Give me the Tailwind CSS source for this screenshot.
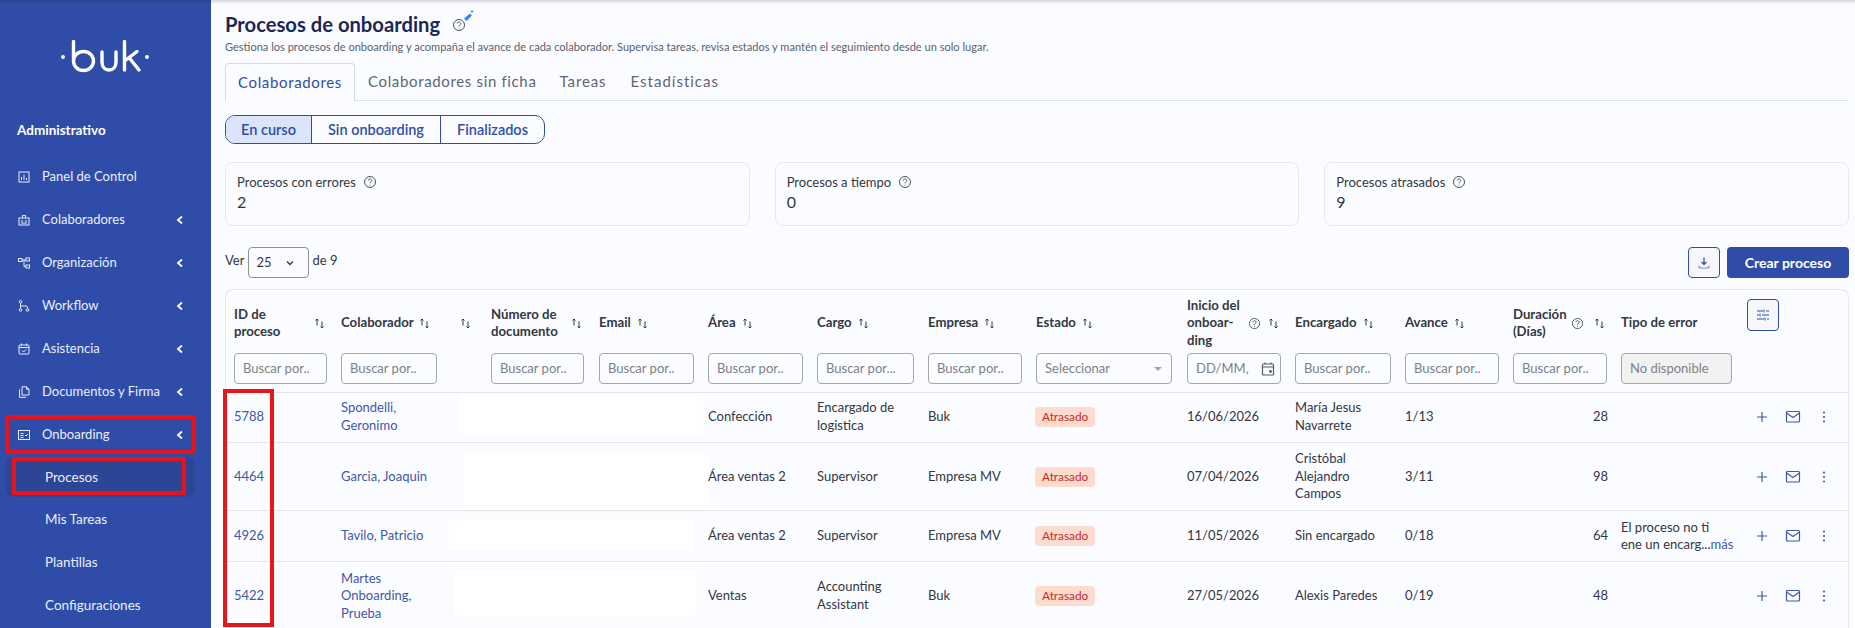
<!DOCTYPE html>
<html lang="es">
<head>
    <meta charset="UTF-8">
    <title>Procesos de onboarding</title>
    <script src="https://cdn.jsdelivr.net/npm/@tailwindcss/browser@4"></script>
</head>
<body class="relative h-[628px] overflow-hidden bg-[#fbfcff] font-['Lato','Noto_Sans',sans-serif] text-[13px] text-[#333842]">
    <div class="flex h-[628px]">
        <!-- Sidebar -->
        <aside class="w-[211px] shrink-0 bg-[#2f4da8] text-[#e9eefb]">
            <div class="flex h-[108px] justify-center pt-[36px]">
                <svg width="94" height="40" viewBox="0 0 94 40" fill="none" stroke="#fff" stroke-width="3.4" stroke-linecap="round">
                    <circle cx="4" cy="21" r="1.200" fill="#fff" stroke-width="1.500"/>
                    <path d="M14.500 5.500V25a10 9.500 0 1 0 20 0a10 9.500 0 1 0-20 0"/>
                    <path d="M43 16v10c0 5 3 8 7 8s7-3 7-8V16"/>
                    <path d="M65.500 5.500V34M65.500 25l12.500-9.500M70 21.500 80 34"/>
                    <circle cx="88" cy="21" r="1.200" fill="#fff" stroke-width="1.500"/>
                </svg>
            </div>
            <div class="pl-[17px] text-[13.500px] leading-[44px] font-bold text-white">Administrativo</div>
            <nav class="mt-[4px]">
                <a class="flex h-[42px] items-center pl-[18px] pr-[26px]">
                    <svg class="mr-[12px] size-[12px]" viewBox="0 0 12 12" fill="none" stroke="currentColor"><rect x="1" y="1" width="10" height="10"/><path d="M3.500 9V6M6 9V3.500M8.500 9V7"/></svg>
                    <span class="flex-1">Panel de Control</span>
                </a>
                <a class="flex h-[43px] items-center pl-[18px] pr-[26px]">
                    <svg class="mr-[12px] size-[12px]" viewBox="0 0 12 12" fill="none" stroke="currentColor"><rect x="1" y="4" width="10" height="7"/><path d="M4.500 4V1.500h3V4M3 7h2M7 7h2M3 9h6"/></svg>
                    <span class="flex-1">Colaboradores</span>
                    <svg class="size-[10px]" viewBox="0 0 10 10" fill="none" stroke="#fff" stroke-width="1.800"><path d="M7 1.500 3 5l4 3.500"/></svg>
                </a>
                <a class="flex h-[43px] items-center pl-[18px] pr-[26px]">
                    <svg class="mr-[12px] size-[12px]" viewBox="0 0 12 12" fill="none" stroke="currentColor"><rect x="0.500" y="1.500" width="3.500" height="3"/><rect x="8" y="1" width="3.500" height="3"/><rect x="8" y="8" width="3.500" height="3"/><path d="M4 3h4M6 3v6.500h2"/></svg>
                    <span class="flex-1">Organización</span>
                    <svg class="size-[10px]" viewBox="0 0 10 10" fill="none" stroke="#fff" stroke-width="1.800"><path d="M7 1.500 3 5l4 3.500"/></svg>
                </a>
                <a class="flex h-[43px] items-center pl-[18px] pr-[26px]">
                    <svg class="mr-[12px] size-[12px]" viewBox="0 0 12 12" fill="none" stroke="currentColor"><circle cx="2.500" cy="1.800" r="1.300"/><circle cx="2.500" cy="10" r="1.300"/><circle cx="9.500" cy="10" r="1.300"/><path d="M2.500 3v5.700M2.500 6H8c1.500 0 1.500 1 1.500 2.700"/></svg>
                    <span class="flex-1">Workflow</span>
                    <svg class="size-[10px]" viewBox="0 0 10 10" fill="none" stroke="#fff" stroke-width="1.800"><path d="M7 1.500 3 5l4 3.500"/></svg>
                </a>
                <a class="flex h-[43px] items-center pl-[18px] pr-[26px]">
                    <svg class="mr-[12px] size-[12px]" viewBox="0 0 12 12" fill="none" stroke="currentColor"><rect x="1" y="2" width="10" height="9" rx="1"/><path d="M1 4.500h10M3.500 0.500V2.500M8.500 0.500V2.500M4 7.500l1.500 1.500 2.500-2.500"/></svg>
                    <span class="flex-1">Asistencia</span>
                    <svg class="size-[10px]" viewBox="0 0 10 10" fill="none" stroke="#fff" stroke-width="1.800"><path d="M7 1.500 3 5l4 3.500"/></svg>
                </a>
                <a class="flex h-[43px] items-center pl-[18px] pr-[26px]">
                    <svg class="mr-[12px] size-[12px]" viewBox="0 0 12 12" fill="none" stroke="currentColor"><path d="M4 0.800h4.500L11 3.300V9H4zM8.500 0.800v2.500H11M1.500 3.500V11.300H8"/></svg>
                    <span class="flex-1">Documentos y Firma</span>
                    <svg class="size-[10px]" viewBox="0 0 10 10" fill="none" stroke="#fff" stroke-width="1.800"><path d="M7 1.500 3 5l4 3.500"/></svg>
                </a>
                <a class="flex h-[43px] items-center pl-[18px] pr-[26px]">
                    <svg class="mr-[12px] size-[12px]" viewBox="0 0 12 12" fill="none" stroke="currentColor"><rect x="0.500" y="1.500" width="11" height="9"/><path d="M2.500 4.500h3M2.500 6.500h3M2.500 8.500h3M7 6l1 1 2-2"/></svg>
                    <span class="flex-1">Onboarding</span>
                    <svg class="size-[10px]" viewBox="0 0 10 10" fill="none" stroke="#fff" stroke-width="1.800"><path d="M7 1.500 3 5l4 3.500"/></svg>
                </a>
                <a class="ml-[6px] mr-[16px] mt-[1px] flex h-[40px] items-center rounded-[8px] bg-[#2c4595] pl-[39px] text-[13.500px]">Procesos</a>
                <a class="mt-[1px] flex h-[43px] items-center pl-[45px] text-[13.500px]">Mis Tareas</a>
                <a class="flex h-[43px] items-center pl-[45px] text-[13.500px]">Plantillas</a>
                <a class="flex h-[43px] items-center pl-[45px] text-[13.500px]">Configuraciones</a>
            </nav>
        </aside>

        <!-- Main -->
        <main class="relative min-w-0 flex-1 pl-[14px] pr-[6px] pt-[11px]">
            <div class="flex h-[26px] items-center gap-[10px]">
                <h1 class="text-[20.200px] font-bold text-[#1b2754]">Procesos de onboarding</h1>
                <svg class="size-[24px] overflow-visible" viewBox="0 0 24 24" fill="none">
                    <circle cx="9" cy="13" r="5.500" stroke="#4b5563"/>
                    <path d="M7.300 11.600c0-2.200 3.400-2.200 3.400 0 0 1.400-1.700 1.300-1.700 2.800M9 15.700v.8" stroke="#4b5563"/>
                    <path d="M14 6.500 20 1.500l2 2-5.500 5.500z" fill="#3b82f6"/>
                    <path d="M22 -2v3M20.500 -.5h3" stroke="#3b82f6" stroke-width=".8"/>
                </svg>
            </div>
            <p class="mt-[2px] text-[11.050px] leading-[16px] text-[#5a616e]">Gestiona los procesos de onboarding y acompaña el avance de cada colaborador. Supervisa tareas, revisa estados y mantén el seguimiento desde un solo lugar.</p>

            <div class="mt-[8px] flex h-[38px] border-b border-[#dfe2e8] text-[15px] tracking-[0.65px] text-[#5f6672]">
                <div class="-mb-px flex w-[130px] items-center justify-center rounded-t-[4px] border border-b-0 border-[#d5d9e0] bg-[#fbfcff] text-[#2f4da8]">Colaboradores</div>
                <div class="flex items-center pl-[13px]">Colaboradores sin ficha</div>
                <div class="flex items-center pl-[23px] tracking-[0.9px]">Tareas</div>
                <div class="flex items-center pl-[24px] tracking-[1px]">Estadísticas</div>
            </div>

            <div class="mt-[14px] flex h-[29px] w-[320px] overflow-hidden rounded-[10px] border border-[#2f4da8] text-[14.500px] font-semibold text-[#2f4da8]">
                <div class="flex w-[86px] items-center justify-center border-r border-[#2f4da8] bg-[#dbe4f8]">En curso</div>
                <div class="flex w-[129px] items-center justify-center border-r border-[#2f4da8]">Sin onboarding</div>
                <div class="flex flex-1 items-center justify-center">Finalizados</div>
            </div>

            <div class="mt-[18px] grid grid-cols-3 gap-[25px]">
                <div class="h-[64px] rounded-[8px] border border-[#e6e8ed] px-[11px] pt-[10px]">
                    <div class="flex items-center gap-[7px] leading-[18px]">Procesos con errores
                        <svg class="size-[14px]" viewBox="0 0 14 14" fill="none" stroke="#4b5563"><circle cx="7" cy="7" r="5.500"/><path d="M5.300 5.600c0-2.200 3.400-2.200 3.400 0 0 1.400-1.700 1.300-1.700 2.800M7 9.800v.8"/></svg>
                    </div>
                    <div class="text-[16px] leading-[22px]">2</div>
                </div>
                <div class="h-[64px] rounded-[8px] border border-[#e6e8ed] px-[11px] pt-[10px]">
                    <div class="flex items-center gap-[7px] leading-[18px]">Procesos a tiempo
                        <svg class="size-[14px]" viewBox="0 0 14 14" fill="none" stroke="#4b5563"><circle cx="7" cy="7" r="5.500"/><path d="M5.300 5.600c0-2.200 3.400-2.200 3.400 0 0 1.400-1.700 1.300-1.700 2.800M7 9.800v.8"/></svg>
                    </div>
                    <div class="text-[16px] leading-[22px]">0</div>
                </div>
                <div class="h-[64px] rounded-[8px] border border-[#e6e8ed] px-[11px] pt-[10px]">
                    <div class="flex items-center gap-[7px] leading-[18px]">Procesos atrasados
                        <svg class="size-[14px]" viewBox="0 0 14 14" fill="none" stroke="#4b5563"><circle cx="7" cy="7" r="5.500"/><path d="M5.300 5.600c0-2.200 3.400-2.200 3.400 0 0 1.400-1.700 1.300-1.700 2.800M7 9.800v.8"/></svg>
                    </div>
                    <div class="text-[16px] leading-[22px]">9</div>
                </div>
            </div>

            <div class="mt-[21px] flex h-[32px] items-start">
                <span class="mt-[4px]">Ver</span>
                <div class="ml-[4px] flex h-[31px] w-[61px] items-center justify-between rounded-[4px] border border-[#8d9199] pl-[7px] pr-[13px]">
                    25
                    <svg class="size-[10px]" viewBox="0 0 10 10" fill="none" stroke="#333" stroke-width="1.300"><path d="M2 3.500 5 6.500 8 3.500"/></svg>
                </div>
                <span class="ml-[3px] mt-[4px]">de 9</span>
                <div class="ml-auto flex gap-[7px]">
                    <div class="flex h-[31px] w-[32px] items-center justify-center rounded-[4px] border border-[#2f4da8] bg-[#f6f7fb]">
                        <svg class="size-[14px]" viewBox="0 0 14 14" fill="none" stroke="#2f4da8" stroke-width="1.200"><path d="M7 1.500v7M4.500 6 7 8.500 9.500 6"/><path d="M2 9.500v1.500c0 .6.400 1 1 1h8c.6 0 1-.4 1-1V9.500" stroke="#7b8ccb"/></svg>
                    </div>
                    <div class="flex h-[31px] w-[122px] items-center justify-center rounded-[4px] bg-[#2f4da8] text-[14px] font-bold text-white">Crear proceso</div>
                </div>
            </div>

            <!-- Table -->
            <div class="relative mt-[10px] w-[1624px] rounded-t-[8px] border border-b-0 border-[#e6e8ed]">
                <button class="absolute left-[1521px] top-[9px] flex size-[32px] items-center justify-center rounded-[4px] border border-[#2f4da8] bg-[#f6f7fb]">
                    <svg class="size-[16px]" viewBox="0 0 16 16" fill="none" stroke="#2f4da8"><path d="M2 4h6M11 4h3M2 8h2M7 8h7M2 12h7M12 12h2M9 2.500v3M5 6.500v3M10 10.500v3"/></svg>
                </button>
                <table class="w-[1622px] table-fixed border-collapse">
                    <colgroup>
                        <col class="w-[107px]"><col class="w-[111px]"><col class="w-[39px]"><col class="w-[108px]"><col class="w-[109px]"><col class="w-[109px]"><col class="w-[111px]"><col class="w-[108px]"><col class="w-[151px]"><col class="w-[108px]"><col class="w-[110px]"><col class="w-[108px]"><col class="w-[108px]"><col class="w-[126px]"><col class="w-[109px]">
                    </colgroup>
                    <thead class="text-left text-[13.200px] leading-[17.500px] font-bold text-[#333842]">
                        <tr class="h-[63px] [&_th]:pt-[3px]">
                            <th class="pl-[8px]"><div class="flex w-[91px] items-center justify-between font-bold"><span>ID de<br>proceso</span> <svg class="size-[11px]" viewBox="0 0 11 11" fill="none" stroke="#333842"><path d="M3 7.500V1M1.500 2.500 3 1l1.500 1.500M8 3.500V10M6.500 8.500 8 10l1.500-1.500"/></svg></div></th>
                            <th class="pl-[8px]"><div class="flex items-center gap-[5px]">Colaborador <svg class="size-[11px]" viewBox="0 0 11 11" fill="none" stroke="#333842"><path d="M3 7.500V1M1.500 2.500 3 1l1.500 1.500M8 3.500V10M6.500 8.500 8 10l1.500-1.500"/></svg></div></th>
                            <th class="pl-[16px]"><svg class="size-[11px]" viewBox="0 0 11 11" fill="none" stroke="#333842"><path d="M3 7.500V1M1.500 2.500 3 1l1.500 1.500M8 3.500V10M6.500 8.500 8 10l1.500-1.500"/></svg></th>
                            <th class="pl-[8px]"><div class="flex w-[91px] items-center justify-between"><span>Número de<br>documento</span> <svg class="size-[11px]" viewBox="0 0 11 11" fill="none" stroke="#333842"><path d="M3 7.500V1M1.500 2.500 3 1l1.500 1.500M8 3.500V10M6.500 8.500 8 10l1.500-1.500"/></svg></div></th>
                            <th class="pl-[8px]"><div class="flex items-center gap-[6px]">Email <svg class="size-[11px]" viewBox="0 0 11 11" fill="none" stroke="#333842"><path d="M3 7.500V1M1.500 2.500 3 1l1.500 1.500M8 3.500V10M6.500 8.500 8 10l1.500-1.500"/></svg></div></th>
                            <th class="pl-[8px]"><div class="flex items-center gap-[6px]">Área <svg class="size-[11px]" viewBox="0 0 11 11" fill="none" stroke="#333842"><path d="M3 7.500V1M1.500 2.500 3 1l1.500 1.500M8 3.500V10M6.500 8.500 8 10l1.500-1.500"/></svg></div></th>
                            <th class="pl-[8px]"><div class="flex items-center gap-[6px]">Cargo <svg class="size-[11px]" viewBox="0 0 11 11" fill="none" stroke="#333842"><path d="M3 7.500V1M1.500 2.500 3 1l1.500 1.500M8 3.500V10M6.500 8.500 8 10l1.500-1.500"/></svg></div></th>
                            <th class="pl-[8px]"><div class="flex items-center gap-[6px]">Empresa <svg class="size-[11px]" viewBox="0 0 11 11" fill="none" stroke="#333842"><path d="M3 7.500V1M1.500 2.500 3 1l1.500 1.500M8 3.500V10M6.500 8.500 8 10l1.500-1.500"/></svg></div></th>
                            <th class="pl-[8px]"><div class="flex items-center gap-[6px]">Estado <svg class="size-[11px]" viewBox="0 0 11 11" fill="none" stroke="#333842"><path d="M3 7.500V1M1.500 2.500 3 1l1.500 1.500M8 3.500V10M6.500 8.500 8 10l1.500-1.500"/></svg></div></th>
                            <th class="pl-[8px]"><div class="flex w-[92px] items-center"><span>Inicio del<br>onboar-<br>ding</span>
                                <svg class="ml-[8px] size-[13px]" viewBox="0 0 14 14" fill="none" stroke="#4b5563"><circle cx="7" cy="7" r="5.500"/><path d="M5.300 5.600c0-2.200 3.400-2.200 3.400 0 0 1.400-1.700 1.300-1.700 2.800M7 9.800v.8"/></svg>
                                <svg class="ml-auto size-[11px]" viewBox="0 0 11 11" fill="none" stroke="#333842"><path d="M3 7.500V1M1.500 2.500 3 1l1.500 1.500M8 3.500V10M6.500 8.500 8 10l1.500-1.500"/></svg></div></th>
                            <th class="pl-[8px]"><div class="flex items-center gap-[6px]">Encargado <svg class="size-[11px]" viewBox="0 0 11 11" fill="none" stroke="#333842"><path d="M3 7.500V1M1.500 2.500 3 1l1.500 1.500M8 3.500V10M6.500 8.500 8 10l1.500-1.500"/></svg></div></th>
                            <th class="pl-[8px]"><div class="flex items-center gap-[6px]">Avance <svg class="size-[11px]" viewBox="0 0 11 11" fill="none" stroke="#333842"><path d="M3 7.500V1M1.500 2.500 3 1l1.500 1.500M8 3.500V10M6.500 8.500 8 10l1.500-1.500"/></svg></div></th>
                            <th class="pl-[8px]"><div class="flex w-[92px] items-center"><span>Duración<br>(Días)</span>
                                <svg class="ml-[4px] size-[13px]" viewBox="0 0 14 14" fill="none" stroke="#4b5563"><circle cx="7" cy="7" r="5.500"/><path d="M5.300 5.600c0-2.200 3.400-2.200 3.400 0 0 1.400-1.700 1.300-1.700 2.800M7 9.800v.8"/></svg>
                                <svg class="ml-auto size-[11px]" viewBox="0 0 11 11" fill="none" stroke="#333842"><path d="M3 7.500V1M1.500 2.500 3 1l1.500 1.500M8 3.500V10M6.500 8.500 8 10l1.500-1.500"/></svg></div></th>
                            <th class="pl-[8px]">Tipo de error</th>
                            <th></th>
                        </tr>
                        <tr class="h-[39px] border-b border-[#e3e5ea] text-[13px] font-normal text-[#7c818a]">
                            <th class="pb-[8px] pl-[8px] font-normal"><div class="flex h-[31px] w-[93px] items-center rounded-[4px] border border-[#a3a6ac] pl-[8px]">Buscar por..</div></th>
                            <th class="pb-[8px] pl-[8px] font-normal"><div class="flex h-[31px] w-[96px] items-center rounded-[4px] border border-[#a3a6ac] pl-[8px]">Buscar por..</div></th>
                            <th></th>
                            <th class="pb-[8px] pl-[8px] font-normal"><div class="flex h-[31px] w-[93px] items-center rounded-[4px] border border-[#a3a6ac] pl-[8px]">Buscar por..</div></th>
                            <th class="pb-[8px] pl-[8px] font-normal"><div class="flex h-[31px] w-[95px] items-center rounded-[4px] border border-[#a3a6ac] pl-[8px]">Buscar por..</div></th>
                            <th class="pb-[8px] pl-[8px] font-normal"><div class="flex h-[31px] w-[95px] items-center rounded-[4px] border border-[#a3a6ac] pl-[8px]">Buscar por..</div></th>
                            <th class="pb-[8px] pl-[8px] font-normal"><div class="flex h-[31px] w-[97px] items-center rounded-[4px] border border-[#a3a6ac] pl-[8px]">Buscar por...</div></th>
                            <th class="pb-[8px] pl-[8px] font-normal"><div class="flex h-[31px] w-[94px] items-center rounded-[4px] border border-[#a3a6ac] pl-[8px]">Buscar por..</div></th>
                            <th class="pb-[8px] pl-[8px] font-normal"><div class="flex h-[31px] w-[136px] items-center justify-between rounded-[4px] border border-[#a3a6ac] pl-[8px] pr-[9px]">Seleccionar
                                <span class="border-x-[4px] border-t-[4px] border-x-transparent border-t-[#a3a6ac]"></span></div></th>
                            <th class="pb-[8px] pl-[8px] font-normal"><div class="flex h-[31px] w-[94px] items-center justify-between rounded-[4px] border border-[#a3a6ac] pl-[8px] pr-[4px]">DD/MM,
                                <svg class="size-[16px]" viewBox="0 0 16 16" fill="none" stroke="#55595f" stroke-width="1.200"><rect x="2.500" y="3" width="11" height="11" rx="1"/><path d="M2.500 6h11M5 1.500V3M11 1.500V3"/><circle cx="10.500" cy="10.500" r=".8" fill="#55595f"/></svg></div></th>
                            <th class="pb-[8px] pl-[8px] font-normal"><div class="flex h-[31px] w-[96px] items-center rounded-[4px] border border-[#a3a6ac] pl-[8px]">Buscar por..</div></th>
                            <th class="pb-[8px] pl-[8px] font-normal"><div class="flex h-[31px] w-[94px] items-center rounded-[4px] border border-[#a3a6ac] pl-[8px]">Buscar por..</div></th>
                            <th class="pb-[8px] pl-[8px] font-normal"><div class="flex h-[31px] w-[94px] items-center rounded-[4px] border border-[#a3a6ac] pl-[8px]">Buscar por..</div></th>
                            <th class="pb-[8px] pl-[8px] font-normal"><div class="flex h-[31px] w-[111px] items-center rounded-[4px] border border-[#a3a6ac] bg-[#f2f2f3] pl-[8px]">No disponible</div></th>
                            <th></th>
                        </tr>
                    </thead>
                    <tbody class="leading-[17.500px] [&_td]:pl-[8px]">
                        <tr class="h-[50px] border-b border-[#e3e5ea] [&_td]:pb-[2px]">
                            <td class="text-[#3f58a8]">5788</td>
                            <td class="text-[#3f58a8]">Spondelli,<br>Geronimo</td>
                            <td colspan="3"><div class="mb-[5px] ml-[9px] h-[39px] w-[242px] bg-white"></div></td>
                            <td>Confección</td>
                            <td>Encargado de<br>logistica</td>
                            <td>Buk</td>
                            <td><span class="-ml-px inline-block rounded-[4px] bg-[#fddccf] px-[7px] text-[11.800px] leading-[20px] text-[#c62a2a]">Atrasado</span></td>
                            <td>16/06/2026</td>
                            <td>María Jesus<br>Navarrete</td>
                            <td>1/13</td>
                            <td class="pr-[5px] text-right">28</td>
                            <td></td>
                            <td>
                                <div class="ml-[7px] flex items-center gap-[15px] text-[#3f58a8]">
                                    <svg class="size-[16px]" viewBox="0 0 16 16" fill="none" stroke="currentColor" stroke-width="1.200"><path d="M8 3v10M3 8h10"/></svg>
                                    <svg class="size-[16px]" viewBox="0 0 16 16" fill="none" stroke="currentColor" stroke-width="1.200"><rect x="1.500" y="2.500" width="13" height="10.500" rx="1"/><path d="M1.500 4 8 8.500 14.500 4"/></svg>
                                    <svg class="size-[16px]" viewBox="0 0 16 16" fill="currentColor"><circle cx="8" cy="3.500" r="1.100"/><circle cx="8" cy="8" r="1.100"/><circle cx="8" cy="12.500" r="1.100"/></svg>
                                </div>
                            </td>
                        </tr>
                        <tr class="h-[68px] border-b border-[#e3e5ea]">
                            <td class="text-[#3f58a8]">4464</td>
                            <td class="text-[#3f58a8]">Garcia, Joaquin</td>
                            <td colspan="3"><div class="ml-[12px] mt-[5px] h-[51px] w-[245px] bg-white"></div></td>
                            <td>Área ventas 2</td>
                            <td>Supervisor</td>
                            <td>Empresa MV</td>
                            <td><span class="-ml-px inline-block rounded-[4px] bg-[#fddccf] px-[7px] text-[11.800px] leading-[20px] text-[#c62a2a]">Atrasado</span></td>
                            <td>07/04/2026</td>
                            <td>Cristóbal<br>Alejandro<br>Campos</td>
                            <td>3/11</td>
                            <td class="pr-[5px] text-right">98</td>
                            <td></td>
                            <td>
                                <div class="ml-[7px] flex items-center gap-[15px] text-[#3f58a8]">
                                    <svg class="size-[16px]" viewBox="0 0 16 16" fill="none" stroke="currentColor" stroke-width="1.200"><path d="M8 3v10M3 8h10"/></svg>
                                    <svg class="size-[16px]" viewBox="0 0 16 16" fill="none" stroke="currentColor" stroke-width="1.200"><rect x="1.500" y="2.500" width="13" height="10.500" rx="1"/><path d="M1.500 4 8 8.500 14.500 4"/></svg>
                                    <svg class="size-[16px]" viewBox="0 0 16 16" fill="currentColor"><circle cx="8" cy="3.500" r="1.100"/><circle cx="8" cy="8" r="1.100"/><circle cx="8" cy="12.500" r="1.100"/></svg>
                                </div>
                            </td>
                        </tr>
                        <tr class="h-[51px] border-b border-[#e3e5ea]">
                            <td class="text-[#3f58a8]">4926</td>
                            <td class="text-[#3f58a8]">Tavilo, Patricio</td>
                            <td colspan="3"><div class="-ml-[3px] mb-[4px] h-[31px] w-[243px] bg-white"></div></td>
                            <td>Área ventas 2</td>
                            <td>Supervisor</td>
                            <td>Empresa MV</td>
                            <td><span class="-ml-px inline-block rounded-[4px] bg-[#fddccf] px-[7px] text-[11.800px] leading-[20px] text-[#c62a2a]">Atrasado</span></td>
                            <td>11/05/2026</td>
                            <td>Sin encargado</td>
                            <td>0/18</td>
                            <td class="pr-[5px] text-right">64</td>
                            <td>El proceso no ti<br>ene un encarg...<span class="text-[#3f58a8]">más</span></td>
                            <td>
                                <div class="ml-[7px] flex items-center gap-[15px] text-[#3f58a8]">
                                    <svg class="size-[16px]" viewBox="0 0 16 16" fill="none" stroke="currentColor" stroke-width="1.200"><path d="M8 3v10M3 8h10"/></svg>
                                    <svg class="size-[16px]" viewBox="0 0 16 16" fill="none" stroke="currentColor" stroke-width="1.200"><rect x="1.500" y="2.500" width="13" height="10.500" rx="1"/><path d="M1.500 4 8 8.500 14.500 4"/></svg>
                                    <svg class="size-[16px]" viewBox="0 0 16 16" fill="currentColor"><circle cx="8" cy="3.500" r="1.100"/><circle cx="8" cy="8" r="1.100"/><circle cx="8" cy="12.500" r="1.100"/></svg>
                                </div>
                            </td>
                        </tr>
                        <tr class="h-[66px] [&_td]:pt-[2px]">
                            <td class="text-[#3f58a8]">5422</td>
                            <td class="text-[#3f58a8]">Martes<br>Onboarding,<br>Prueba</td>
                            <td colspan="3"><div class="ml-[2px] mb-[2px] h-[44px] w-[243px] bg-white"></div></td>
                            <td>Ventas</td>
                            <td>Accounting<br>Assistant</td>
                            <td>Buk</td>
                            <td><span class="-ml-px inline-block rounded-[4px] bg-[#fddccf] px-[7px] text-[11.800px] leading-[20px] text-[#c62a2a]">Atrasado</span></td>
                            <td>27/05/2026</td>
                            <td>Alexis Paredes</td>
                            <td>0/19</td>
                            <td class="pr-[5px] text-right">48</td>
                            <td></td>
                            <td>
                                <div class="ml-[7px] flex items-center gap-[15px] text-[#3f58a8]">
                                    <svg class="size-[16px]" viewBox="0 0 16 16" fill="none" stroke="currentColor" stroke-width="1.200"><path d="M8 3v10M3 8h10"/></svg>
                                    <svg class="size-[16px]" viewBox="0 0 16 16" fill="none" stroke="currentColor" stroke-width="1.200"><rect x="1.500" y="2.500" width="13" height="10.500" rx="1"/><path d="M1.500 4 8 8.500 14.500 4"/></svg>
                                    <svg class="size-[16px]" viewBox="0 0 16 16" fill="currentColor"><circle cx="8" cy="3.500" r="1.100"/><circle cx="8" cy="8" r="1.100"/><circle cx="8" cy="12.500" r="1.100"/></svg>
                                </div>
                            </td>
                        </tr>
                    </tbody>
                </table>
            </div>
        </main>
    </div>

    <!-- top shadow and red annotation boxes over the screenshot -->
    <div class="absolute inset-x-0 top-0 h-[4px] bg-gradient-to-b from-black/15 to-transparent"></div>
    <div class="absolute left-[5px] top-[415px] h-[39px] w-[191px] border-4 border-[#e8141c]"></div>
    <div class="absolute left-[12px] top-[457px] h-[38px] w-[174px] border-4 border-[#e8141c]"></div>
    <div class="absolute left-[223px] top-[389px] h-[238px] w-[51px] border-4 border-[#e8141c]"></div>
</body>
</html>
